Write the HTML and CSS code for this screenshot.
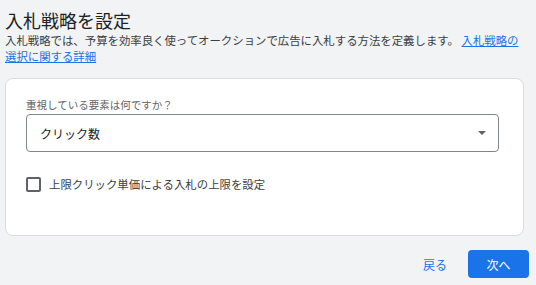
FILE: index.html
```html
<!DOCTYPE html>
<html lang="ja">
<head>
<meta charset="utf-8">
<title>入札戦略を設定</title>
<link rel="stylesheet" href="styles.css">
</head>
<body>
<div class="page">
  <h1 class="title">入札戦略を設定</h1>
  <p class="desc">入札戦略では、予算を効率良く使ってオークションで広告に入札する方法を定義します。 <a class="link" href="#">入札戦略の選択に関する詳細</a></p>
  <div class="card">
    <div class="field-label">重視している要素は何ですか？</div>
    <div class="select">
      <span class="select-value">クリック数</span>
      <span class="caret"></span>
    </div>
    <label class="check-row">
      <span class="checkbox"></span>
      <span class="check-text">上限クリック単価による入札の上限を設定</span>
    </label>
  </div>
  <div class="footer">
    <button class="btn-text">戻る</button>
    <button class="btn-primary">次へ</button>
  </div>
</div>
</body>
</html>
```
FILE: styles.css
```css
html, body {
  margin: 0;
  padding: 0;
  background: #f1f3f4;
}
body {
  font-family: "Noto Sans CJK JP", "Noto Sans", sans-serif;
  color: #202124;
}
.page {
  padding: 9px 7px 0 5px;
}
.title {
  margin: 0;
  font-size: 18px;
  line-height: 22px;
  font-weight: 400;
  color: #202124;
}
.desc {
  margin: 2px 5px 0 0;
  font-size: 11.4px;
  line-height: 15.5px;
  color: #3c4043;
}
.link {
  color: #1a73e8;
  text-decoration: underline;
}
.card {
  margin: 14px 5px 0 0;
  background: #fff;
  border: 1px solid #dadce0;
  border-radius: 8px;
  padding: 19px 24px 41px 20px;
  height: 158px;
  box-sizing: border-box;
}
.field-label {
  font-size: 10.5px;
  line-height: 14px;
  color: #5f6368;
}
.select {
  margin-top: 2px;
  height: 38px;
  box-sizing: border-box;
  border: 1px solid #80868b;
  border-radius: 4px;
  display: flex;
  align-items: center;
  justify-content: space-between;
  padding: 0 12px 0 13px;
}
.select-value {
  font-size: 12px;
  color: #202124;
}
.caret {
  width: 0;
  height: 0;
  border-left: 4px solid transparent;
  border-right: 4px solid transparent;
  border-top: 4px solid #5f6368;
}
.check-row {
  margin-top: 22px;
  height: 20px;
  display: flex;
  align-items: center;
  gap: 8px;
}
.checkbox {
  width: 15px;
  height: 15px;
  box-sizing: border-box;
  border: 2px solid #5f6368;
  border-radius: 2px;
  flex: none;
}
.check-text {
  font-size: 11.4px;
  color: #3c4043;
}
.footer {
  margin-top: 14px;
  display: flex;
  justify-content: flex-end;
  align-items: center;
  gap: 11px;
}
.btn-text, .btn-primary {
  font-family: "Noto Sans CJK JP", "Noto Sans", sans-serif;
  font-size: 12px;
  height: 28px;
  border: none;
  border-radius: 4px;
  cursor: pointer;
}
.btn-text {
  background: transparent;
  color: #1a73e8;
  padding: 0 10px;
}
.btn-primary {
  background: #1a73e8;
  color: #fff;
  width: 61px;
  padding: 0;
}
```
